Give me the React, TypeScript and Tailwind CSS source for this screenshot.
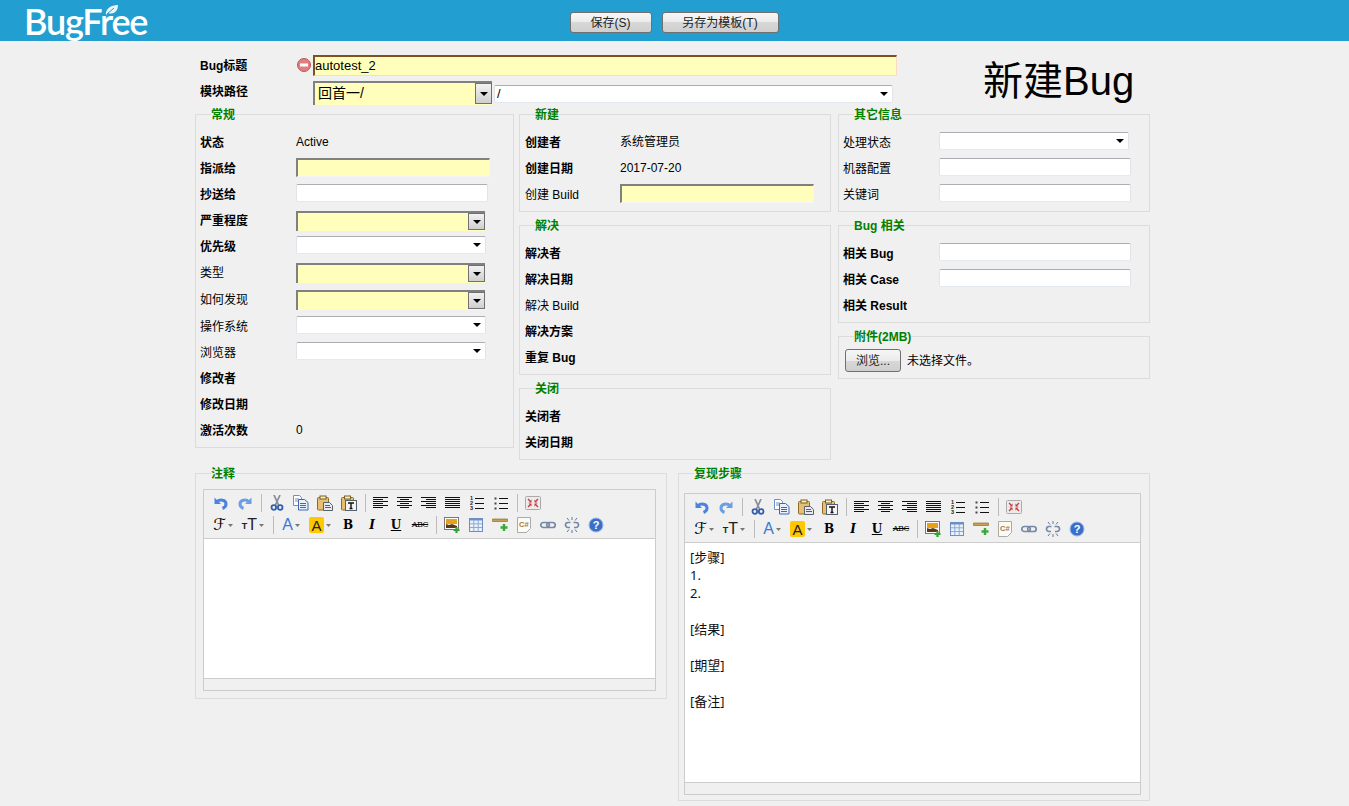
import type { ReactNode } from "react";

const FONT = "font-['Liberation_Sans','Noto_Sans_CJK_SC',sans-serif]";

function Arrow({ className = "" }: { className?: string }) {
  return (
    <svg width="8" height="4" viewBox="0 0 8 4" className={className}>
      <path d="M0 0h8L4 4z" fill="#000" />
    </svg>
  );
}

function TinyArrow() {
  return (
    <svg width="5" height="3" viewBox="0 0 5 3" className="ml-[2px]">
      <path d="M0 0h5L2.5 3z" fill="#777" />
    </svg>
  );
}

function YellowInput({ width = "w-[194px]" }: { width?: string }) {
  return (
    <div className={`${width} mb-[2px] h-[19px] border-t-[2px] border-r border-b border-l-[2px] border-t-[#808080] border-r-[#f5f5f5] border-b-[#f5f5f5] border-l-[#808080] bg-[#ffffbb]`} />
  );
}

function WhiteInput() {
  return (
    <div className="mb-[2px] h-[18px] w-[192px] rounded-[2px] border border-t-[#abadb3] border-r-[#e2e3ea] border-b-[#e3e9ef] border-l-[#e2e3ea] bg-white" />
  );
}

function YellowSelect({ value, width = "w-[189px]", height = "h-[20px]" }: { value?: string; width?: string; height?: string }) {
  return (
    <div className={`${width} ${height} mt-[2px] flex border-t-[2px] border-l-[2px] border-t-[#808080] border-l-[#808080] bg-[#ffffbb]`}>
      <span className="flex-1 pl-[3px] text-[14px] leading-[21px] text-black">{value}</span>
      <span className="mb-[1px] flex w-[17px] items-center justify-center border border-[#707070] bg-gradient-to-b from-[#f2f2f2] to-[#cfcfcf]">
        <Arrow />
      </span>
    </div>
  );
}

function WhiteSelect({ value, width = "w-[190px]" }: { value?: string; width?: string }) {
  return (
    <div className={`${width} mb-[2px] flex h-[18px] items-center rounded-[2px] border border-t-[#abadb3] border-r-[#e2e3ea] border-b-[#e3e9ef] border-l-[#e2e3ea] bg-white pr-[4px]`}>
      <span className="flex-1 pl-[2px] text-[13px] text-black">{value}</span>
      <Arrow />
    </div>
  );
}

function Row({ label, bold, labelWidth = "w-[96px]", extra = "", children }: { label: string; bold?: boolean; labelWidth?: string; extra?: string; children?: ReactNode }) {
  return (
    <div className={`flex h-[26px] items-center ${extra}`}>
      <span className={`${labelWidth} shrink-0 pt-[2px] text-[12px] text-black ${bold ? "font-bold" : ""}`}>{label}</span>
      {children}
    </div>
  );
}

function Group({ title, className = "", inner = "", children }: { title: string; className?: string; inner?: string; children: ReactNode }) {
  return (
    <fieldset className={`border border-[#dcdcdc] ${className}`}>
      <legend className="ml-[15px] h-[14px] text-[12px] leading-[16px] font-bold text-[#008000]">{title}</legend>
      <div className={inner}>{children}</div>
    </fieldset>
  );
}

function Lines({ kind }: { kind: "left" | "center" | "right" | "full" }) {
  const long = [0, 15];
  const short =
    kind === "left" ? [0, 10] : kind === "center" ? [3, 12] : kind === "right" ? [5, 15] : [0, 15];
  return (
    <svg width="16" height="16" viewBox="0 0 16 16">
      {[2.5, 4.5, 6.5, 8.5, 10.5, 12.5].map((y, i) => {
        const [a, b] = i % 2 === 0 ? long : short;
        return <path key={y} d={`M${a} ${y}H${b}`} stroke="#111" strokeWidth="1" />;
      })}
    </svg>
  );
}

const icons: Record<string, ReactNode> = {
  undo: (
    <svg width="16" height="16" viewBox="0 0 16 16">
      <path d="M1.500 2.500v6.500H8z" fill="#4a84e0" />
      <path d="M4 7c2.500-3 9-2.500 9 2 0 2-1 3.500-3.500 4.500" fill="none" stroke="#4a84e0" strokeWidth="3" />
    </svg>
  ),
  redo: (
    <svg width="16" height="16" viewBox="0 0 16 16">
      <path d="M14.500 2.500v6.500H8z" fill="#6a9ee6" />
      <path d="M12 7c-2.500-3-9-2.500-9 2 0 2 1 3.500 3.500 4.500" fill="none" stroke="#6a9ee6" strokeWidth="3" />
    </svg>
  ),
  cut: (
    <svg width="16" height="16" viewBox="0 0 16 16">
      <path d="M5 0l4.500 10M11 0L6.500 10" stroke="#8a8f98" strokeWidth="1.800" fill="none" />
      <circle cx="4.800" cy="12.500" r="2.300" fill="none" stroke="#2f5fae" strokeWidth="1.800" />
      <circle cx="11.200" cy="12.500" r="2.300" fill="none" stroke="#2f5fae" strokeWidth="1.800" />
    </svg>
  ),
  copy: (
    <svg width="16" height="16" viewBox="0 0 16 16">
      <path d="M.5 .5h6l2 2v8h-8z" fill="#fff" stroke="#6f8fc8" />
      <path d="M2 4h4M2 6h3" stroke="#6f8fc8" />
      <path d="M5.500 4.500h6l3.500 3v7.500H5.500z" fill="#e8f0fb" stroke="#3f68b0" />
      <path d="M7 8.500h6M7 10.500h6M7 12.500h6" stroke="#3f68b0" />
    </svg>
  ),
  paste: (
    <svg width="16" height="16" viewBox="0 0 16 16">
      <rect x=".5" y="2.500" width="11" height="12.500" rx="1" fill="#e6c070" stroke="#8f6a25" />
      <rect x="3" y="1" width="6" height="3" fill="#f7eecc" stroke="#77611f" />
      <path d="M6.500 7.500h6l3 3v5h-9z" fill="#e9e9ee" stroke="#55606e" />
      <path d="M8 10.500h5M8 12.500h6" stroke="#55606e" />
    </svg>
  ),
  pastetext: (
    <svg width="16" height="16" viewBox="0 0 16 16">
      <rect x=".5" y="2.500" width="12" height="12.500" rx="1" fill="#e6c070" stroke="#8f6a25" />
      <rect x="3.500" y="1" width="6" height="3" fill="#f7eecc" stroke="#77611f" />
      <rect x="4.500" y="5.500" width="11" height="10" fill="#f4f4f4" stroke="#55606e" />
      <path d="M7 8h6M10 8v5.500M8.500 13.500h3" stroke="#111" strokeWidth="1.400" fill="none" />
    </svg>
  ),
  ol: (
    <svg width="16" height="16" viewBox="0 0 16 16">
      <path d="M6 3.500h9M6 8.500h9M6 13.500h9" stroke="#111" />
      <g fontSize="5.500" fontWeight="700" fill="#222" fontFamily="Liberation Sans">
        <text x="1" y="5">1</text>
        <text x="1" y="10">2</text>
        <text x="1" y="15">3</text>
      </g>
    </svg>
  ),
  ul: (
    <svg width="16" height="16" viewBox="0 0 16 16">
      <path d="M6 3.500h9M6 8.500h9M6 13.500h9" stroke="#111" />
      <rect x="1.500" y="2.500" width="2" height="2" fill="#444" />
      <rect x="1.500" y="7.500" width="2" height="2" fill="#444" />
      <rect x="1.500" y="12.500" width="2" height="2" fill="#444" />
    </svg>
  ),
  full: (
    <svg width="16" height="16" viewBox="0 0 16 16">
      <rect x=".5" y="1.500" width="15" height="13" rx="1" fill="#ececec" stroke="#aaa" />
      <path d="M3 4l2 2M13 4l-2 2M3 12l2-2M13 12l-2-2" stroke="#c33" strokeWidth="1.200" />
      <path d="M6.500 4.500v3h-3zM9.500 4.500v3h3zM6.500 11.500v-3h-3zM9.500 11.500v-3h3z" fill="#c33" />
    </svg>
  ),
  image: (
    <svg width="16" height="16" viewBox="0 0 16 16">
      <rect x=".5" y=".5" width="14" height="12" fill="#fff" stroke="#777" />
      <rect x="2" y="2" width="11" height="5" fill="#e8a018" />
      <path d="M2 11V7l3 1 3-1 5 2v2z" fill="#5a3a10" />
      <path d="M12.500 10v6M9.500 13h6" stroke="#2fa52f" strokeWidth="2.200" />
    </svg>
  ),
  table: (
    <svg width="16" height="16" viewBox="0 0 16 16">
      <rect x="1.500" y="1.500" width="13" height="13" fill="#eaf1fb" stroke="#6d8fc2" />
      <path d="M1.500 2.500h13" stroke="#6d8fc2" strokeWidth="2" />
      <path d="M5.800 3v11M10.200 3v11M2 6.800h12M2 10.500h12" stroke="#8eaad4" />
    </svg>
  ),
  hr: (
    <svg width="16" height="16" viewBox="0 0 16 16">
      <rect x="0" y="2" width="16" height="2.500" rx="1" fill="#c9a04e" stroke="#7a6224" strokeWidth=".6" />
      <path d="M12 7v7M8.500 10.500h7" stroke="#3aa83a" strokeWidth="2.400" />
    </svg>
  ),
  code: (
    <svg width="16" height="16" viewBox="0 0 16 16">
      <path d="M1.500 .5h13v11l-4 4h-9z" fill="#fbfbf6" stroke="#aaa" />
      <text x="3" y="9.500" fontSize="7.500" fontWeight="700" fill="#a5793a" fontFamily="Liberation Sans">C#</text>
    </svg>
  ),
  link: (
    <svg width="16" height="16" viewBox="0 0 16 16">
      <rect x=".8" y="5.500" width="8.500" height="5" rx="2.500" fill="none" stroke="#7788a5" strokeWidth="1.700" />
      <rect x="6.700" y="5.500" width="8.500" height="5" rx="2.500" fill="none" stroke="#7788a5" strokeWidth="1.700" />
    </svg>
  ),
  unlink: (
    <svg width="16" height="16" viewBox="0 0 16 16">
      <path d="M6.500 5.500H4a2.500 2.500 0 000 5h2M9.500 5.500H12a2.500 2.500 0 010 5h-2" fill="none" stroke="#7788a5" strokeWidth="1.700" />
      <path d="M8 0v3M8 13v3M3 1l2 2.500M13 1l-2 2.500M3 15l2-2.500M13 15l-2-2.500" stroke="#44587a" strokeWidth=".8" />
    </svg>
  ),
  help: (
    <svg width="16" height="16" viewBox="0 0 16 16">
      <circle cx="8" cy="8" r="7" fill="#3a6fc9" stroke="#9bb8e6" />
      <text x="8" y="12" textAnchor="middle" fontSize="11" fontWeight="700" fill="#fff" fontFamily="Liberation Sans">?</text>
    </svg>
  ),
};

function Btn({ children, w = "w-[24px]" }: { children: ReactNode; w?: string }) {
  return <span className={`flex h-[22px] ${w} shrink-0 items-center justify-center`}>{children}</span>;
}

function Sep() {
  return (
    <span className="flex h-[22px] w-[8px] shrink-0 items-center justify-center">
      <span className="h-[18px] w-px bg-[#bbb]" />
    </span>
  );
}

function Toolbar() {
  return (
    <div className="h-[49px] border-b border-[#cccccc] pt-[2px] pl-[5px]">
      <div className="flex">
        <Btn>{icons.undo}</Btn>
        <Btn>{icons.redo}</Btn>
        <Sep />
        <Btn>{icons.cut}</Btn>
        <Btn>{icons.copy}</Btn>
        <Btn>{icons.paste}</Btn>
        <Btn>{icons.pastetext}</Btn>
        <Sep />
        <Btn><Lines kind="left" /></Btn>
        <Btn><Lines kind="center" /></Btn>
        <Btn><Lines kind="right" /></Btn>
        <Btn><Lines kind="full" /></Btn>
        <Btn>{icons.ol}</Btn>
        <Btn>{icons.ul}</Btn>
        <Sep />
        <Btn>{icons.full}</Btn>
      </div>
      <div className="flex">
        <Btn w="w-[28px]">
          <span className="font-['DejaVu_Sans',serif] text-[16px] leading-none text-black">ℱ</span>
          <TinyArrow />
        </Btn>
        <Btn w="w-[32px]">
          <span className="self-end pb-[5px] text-[9px] leading-none font-bold text-[#222]">T</span>
          <span className="text-[16px] leading-none text-[#222]">T</span>
          <TinyArrow />
        </Btn>
        <Sep />
        <Btn w="w-[28px]">
          <span className="text-[16px] leading-none text-[#3a78d8]">A</span>
          <TinyArrow />
        </Btn>
        <Btn w="w-[30px]">
          <span className="flex h-[16px] w-[15px] items-center justify-center rounded-[2px] bg-[#ffc800] text-[15px] leading-none text-[#222]">A</span>
          <TinyArrow />
        </Btn>
        <span className="w-px" />
        <Btn><span className="font-['DejaVu_Serif',serif] text-[12px] font-bold text-black">B</span></Btn>
        <Btn><span className="font-['DejaVu_Serif',serif] text-[12px] font-bold text-black italic">I</span></Btn>
        <Btn><span className="font-['DejaVu_Serif',serif] text-[12px] font-bold text-black underline">U</span></Btn>
        <Btn><span className="font-['DejaVu_Serif',serif] text-[8px] tracking-[-0.5px] text-black line-through">ABC</span></Btn>
        <Sep />
        <Btn>{icons.image}</Btn>
        <Btn>{icons.table}</Btn>
        <Btn>{icons.hr}</Btn>
        <Btn>{icons.code}</Btn>
        <Btn>{icons.link}</Btn>
        <Btn>{icons.unlink}</Btn>
        <Btn>{icons.help}</Btn>
      </div>
    </div>
  );
}

function Editor({ bodyHeight, lines = [] }: { bodyHeight: string; lines?: string[] }) {
  return (
    <div className="border border-[#cccccc] bg-[#f0f0f0]">
      <Toolbar />
      <div className={`${bodyHeight} bg-white px-[5px] pt-[5px] font-['Noto_Sans','Noto_Sans_CJK_SC',sans-serif] text-[13px] leading-[18px] text-[#111]`}>
        {lines.map((line, i) => (
          <div key={i} className="h-[18px]">{line}</div>
        ))}
      </div>
      <div className="h-[12px] border-t border-[#cccccc]" />
    </div>
  );
}

function HeadButton({ children, w }: { children: ReactNode; w: string }) {
  return (
    <button className={`${w} h-[21px] rounded-[3px] border border-[#707070] bg-[linear-gradient(#f6f6f6,#ebebeb_50%,#d8d8d8_50%,#cfcfcf)] text-[12px] leading-none text-[#222]`}>
      {children}
    </button>
  );
}

export default function App() {
  return (
    <div className={`min-h-[806px] bg-[#f0f0f0] ${FONT}`}>
      <header className="relative flex h-[41px] items-center justify-center gap-[10px] bg-[#229fd0] pt-[4px] pr-[1px]">
        <div className="absolute top-0 left-[24px] flex h-[41px] items-center">
          <span className="font-['Lato',sans-serif] text-[36px] leading-none font-semibold tracking-[-1.2px] text-white">BugFree</span>
          <svg width="14" height="12" viewBox="0 0 14 12" className="absolute top-[4px] left-[81px]">
            <path d="M1 11C0 5 6 1 13 1c0 6-4 10-10 8" fill="#e8f6fb" />
            <path d="M2 10l7-6" stroke="#229fd0" />
          </svg>
        </div>
        <HeadButton w="w-[82px]">保存(S)</HeadButton>
        <HeadButton w="w-[117px]">另存为模板(T)</HeadButton>
      </header>

      <main className="ml-[195px] w-[955px] pt-[13px]">
        <div className="flex h-[53px]">
          <div className="w-[788px]">
            <div className="flex h-[22px] items-center">
              <span className="w-[102px] pt-[2px] pl-[5px] text-[12px] font-bold text-black">Bug标题</span>
              <svg width="14" height="14" viewBox="0 0 14 14" className="mr-[2px]">
                <circle cx="7" cy="7" r="6.500" fill="#df7f7f" stroke="#b85a5a" />
                <rect x="3" y="5.500" width="8" height="3" fill="#fff" />
              </svg>
              <input
                readOnly
                value="autotest_2"
                className="h-[21px] w-[584px] border-t-[2px] border-r border-b border-l-[2px] border-t-[#7f5020] border-r-[#fcdcc0] border-b-[#fcdcc0] border-l-[#7f5020] bg-[#ffffbb] text-[13px] text-black outline-none"
              />
            </div>
            <div className="mt-[3px] flex items-start">
              <span className="w-[118px] pt-[4px] pl-[5px] text-[12px] font-bold text-black">模块路径</span>
              <YellowSelect value="回首一/" width="w-[179px]" height="h-[24px]" />
              <div className="mt-[6px] ml-[2px]">
                <WhiteSelect value="/" width="w-[399px]" />
              </div>
            </div>
          </div>
          <h1 className="pt-[2px] text-[40px] leading-[50px] text-black">新建Bug</h1>
        </div>

        <div className="flex items-start">
          <Group title="常规" className="w-[319px]" inner="px-[4px] pt-[8px] pb-[4px]">
            <Row label="状态" bold><span className="text-[12px] text-black">Active</span></Row>
            <Row label="指派给" bold><YellowInput /></Row>
            <Row label="抄送给" bold><WhiteInput /></Row>
            <Row label="严重程度" bold><YellowSelect /></Row>
            <Row label="优先级" bold><WhiteSelect /></Row>
            <Row label="类型"><YellowSelect /></Row>
            <Row label="如何发现" extra="mt-[1px]"><YellowSelect /></Row>
            <Row label="操作系统" extra="mt-[1px]"><WhiteSelect /></Row>
            <Row label="浏览器"><WhiteSelect /></Row>
            <Row label="修改者" bold />
            <Row label="修改日期" bold />
            <Row label="激活次数" bold><span className="text-[12px] text-black">0</span></Row>
          </Group>

          <div className="ml-[5px] flex w-[312px] flex-col gap-[6px]">
            <Group title="新建" inner="px-[5px] pt-[8px] pb-[4px]">
              <Row label="创建者" bold labelWidth="w-[95px]"><span className="text-[12px] text-black">系统管理员</span></Row>
              <Row label="创建日期" bold labelWidth="w-[95px]"><span className="text-[12px] text-black">2017-07-20</span></Row>
              <Row label="创建 Build" labelWidth="w-[95px]"><YellowInput /></Row>
            </Group>
            <Group title="解决" inner="px-[5px] pt-[8px] pb-[4px]">
              <Row label="解决者" bold />
              <Row label="解决日期" bold />
              <Row label="解决 Build" />
              <Row label="解决方案" bold />
              <Row label="重复 Bug" bold />
            </Group>
            <Group title="关闭" inner="px-[5px] pt-[8px] pb-[4px]">
              <Row label="关闭者" bold />
              <Row label="关闭日期" bold />
            </Group>
          </div>

          <div className="ml-[7px] flex w-[312px] flex-col gap-[6px]">
            <Group title="其它信息" inner="px-[4px] pt-[8px] pb-[4px]">
              <Row label="处理状态"><WhiteSelect /></Row>
              <Row label="机器配置"><WhiteInput /></Row>
              <Row label="关键词"><WhiteInput /></Row>
            </Group>
            <Group title="Bug 相关" inner="px-[4px] pt-[8px] pb-[4px]">
              <Row label="相关 Bug" bold><WhiteInput /></Row>
              <Row label="相关 Case" bold><WhiteInput /></Row>
              <Row label="相关 Result" bold />
            </Group>
            <Group title="附件(2MB)" className="h-[50px]" inner="px-[6px]">
              <div className="flex items-center pt-[6px]">
                <button className="h-[23px] w-[56px] rounded-[3px] border border-[#707070] bg-[linear-gradient(#f6f6f6,#ebebeb_50%,#d8d8d8_50%,#cfcfcf)] text-[12px] leading-none text-[#222]">浏览...</button>
                <span className="ml-[6px] text-[12px] text-black">未选择文件。</span>
              </div>
            </Group>
          </div>
        </div>

        <div className="mt-[6px] flex items-start gap-[11px]">
          <Group title="注释" className="w-[472px]" inner="pt-[9px] pr-[10px] pb-[7px] pl-[7px]">
            <Editor bodyHeight="h-[139px]" />
          </Group>
          <Group title="复现步骤" className="w-[472px]" inner="pt-[13px] pr-[8px] pb-[5px] pl-[5px]">
            <Editor
              bodyHeight="h-[239px]"
              lines={["[步骤]", "1.", "2.", "", "[结果]", "", "[期望]", "", "[备注]"]}
            />
          </Group>
        </div>
      </main>
    </div>
  );
}
